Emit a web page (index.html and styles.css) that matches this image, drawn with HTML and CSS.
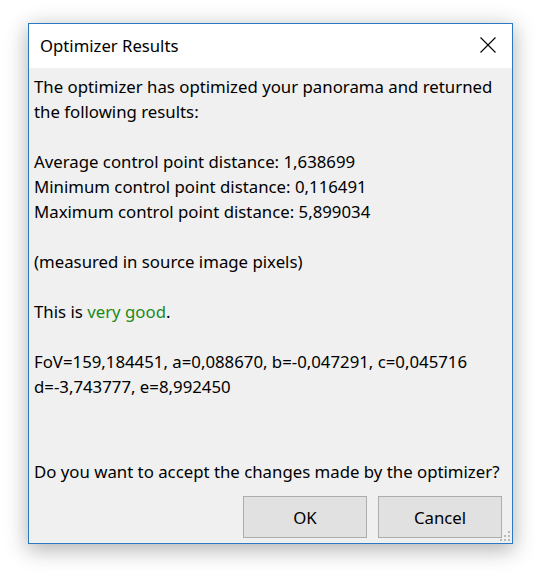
FILE: index.html
```html
<!DOCTYPE html>
<html>
<head>
<meta charset="utf-8">
<link rel="stylesheet" href="styles.css">
</head>
<body>
<div class="page">
  <div class="dialog">
    <div class="titlebar">
      <span class="title">Optimizer Results</span>
      <svg class="close" width="16" height="16" viewBox="0 0 16 16"><path d="M0.5 0.5 L15.5 15.5 M15.5 0.5 L0.5 15.5" stroke="#000" stroke-width="1.1" fill="none"/></svg>
    </div>
    <div class="content">
      <div class="message">
        <p>The optimizer has optimized your panorama and returned<br>the following results:</p>
        <p>Average control point distance: 1,638699<br>Minimum control point distance: 0,116491<br>Maximum control point distance: 5,899034</p>
        <p>(measured in source image pixels)</p>
        <p>This is <span class="good">very good</span>.</p>
        <p>FoV=159,184451, a=0,088670, b=-0,047291, c=0,045716<br>d=-3,743777, e=8,992450</p>
      </div>
      <p class="question">Do you want to accept the changes made by the optimizer?</p>
      <div class="buttons">
        <button class="btn">OK</button>
        <button class="btn">Cancel</button>
      </div>
      <svg class="grip" width="12" height="12" viewBox="0 0 12 12" fill="#b8b8b8">
        <rect x="9" y="1" width="2" height="2"/>
        <rect x="5" y="5" width="2" height="2"/><rect x="9" y="5" width="2" height="2"/>
        <rect x="1" y="9" width="2" height="2"/><rect x="5" y="9" width="2" height="2"/><rect x="9" y="9" width="2" height="2"/>
      </svg>
    </div>
  </div>
</div>
</body>
</html>
```
FILE: styles.css
```css
html, body {
  margin: 0;
  padding: 0;
  background: #ffffff;
}
.page {
  padding: 23px 0 29px 28px;
  min-height: 572px;
  box-sizing: border-box;
}
.dialog {
  width: 483px;
  height: 519px;
  border: 1px solid #2b79c2;
  background: #f0f0f0;
  display: flex;
  flex-direction: column;
  box-shadow: 0 5px 20px 1px rgba(0, 0, 0, 0.3);
  font-family: "Noto Sans", "Open Sans", sans-serif;
  color: #000;
}
.titlebar {
  height: 44px;
  background: #ffffff;
  display: flex;
  align-items: center;
  justify-content: space-between;
  padding: 0 16px 0 11px;
  flex-shrink: 0;
}
.title {
  font-size: 16.7px;
  margin-top: -2px;
}
.close {
  display: block;
  margin-top: -2px;
}
.content {
  flex: 1;
  display: flex;
  flex-direction: column;
  padding: 6px 5px 5px 5px;
  position: relative;
  font-size: 16.8px;
  line-height: 25px;
}
.message p {
  margin: 0 0 25px 0;
}
.message p:last-child {
  margin-bottom: 0;
}
.question {
  margin: auto 0 0 0;
}
.buttons {
  display: flex;
  justify-content: flex-end;
  gap: 11px;
  margin-top: 12px;
  padding-right: 5px;
}
.btn {
  width: 124px;
  height: 42px;
  background: #e1e1e1;
  border: 1px solid #adadad;
  font-family: inherit;
  font-size: 16.8px;
  color: #000;
  padding: 0;
}
.grip {
  position: absolute;
  right: 1px;
  bottom: 1px;
}
.good {
  color: #1a8a1a;
}
```
